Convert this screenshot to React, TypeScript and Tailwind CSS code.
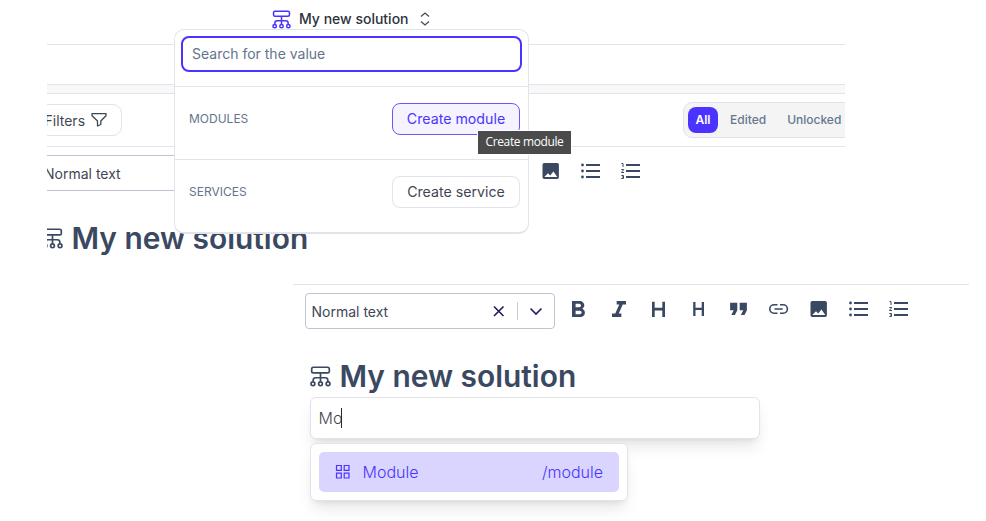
import React from "react";

const ink = "#3a4961";

function SolutionIcon({ className }: { className: string }) {
  return (
    <svg viewBox="0 0 20 20" className={className} fill="none" stroke="currentColor" strokeWidth="1.6">
      <rect x="1.6" y="1.2" width="16.8" height="5.4" rx="1.6" />
      <path d="M10 6.6V15M3 15v-1.4a2.4 2.4 0 0 1 2.400-2.400h9.200a2.400 2.400 0 0 1 2.400 2.400V15" />
      <circle cx="2.8" cy="17" r="1.8" />
      <circle cx="10" cy="17" r="1.8" />
      <circle cx="17.2" cy="17" r="1.8" />
    </svg>
  );
}

function Glyph({ children }: { children: React.ReactNode }) {
  return (
    <svg viewBox="0 0 24 24" className="size-6 shrink-0" fill={ink}>
      {children}
    </svg>
  );
}

const Bold = () => (
  <Glyph>
    <path
      transform="translate(-2.4 -.57) scale(1.2 1.143)"
      d="M15.6 10.79c.97-.67 1.65-1.77 1.65-2.79 0-2.26-1.75-4-4-4H7v14h7.04c2.09 0 3.71-1.7 3.71-3.79 0-1.52-.86-2.82-2.15-3.42zM10 6.5h3c.83 0 1.5.67 1.5 1.5s-.67 1.5-1.5 1.5h-3v-3zm3.5 9H10v-3h3.5c.83 0 1.5.67 1.5 1.5s-.67 1.5-1.5 1.5z"
    />
  </Glyph>
);
const Italic = () => (
  <Glyph>
    <path transform="translate(-1 -.57) scale(1.167 1.143)" d="M10 4v3h2.21l-3.42 8H6v3h8v-3h-2.21l3.42-8H18V4z" />
  </Glyph>
);
const HeadingLarge = () => (
  <Glyph>
    <path d="M6 4.7h2.7v6H16.3v-6H19V20h-2.7v-6.6H8.7V20H6z" />
  </Glyph>
);
const HeadingSmall = () => (
  <Glyph>
    <path d="M7.2 5h2.3v5.8h6.2V5H18v14h-2.3v-6H9.500V19H7.200z" />
  </Glyph>
);
const Quote = () => (
  <Glyph>
    <path transform="translate(-1.9 -2.7) scale(1.2 1.22)" d="M6 17h3l2-4V7H5v6h3zm8 0h3l2-4V7h-6v6h3z" />
  </Glyph>
);
const LinkGlyph = () => (
  <Glyph>
    <path d="M11.500 7.8H8a4.200 4.200 0 0 0 0 8.400h3.500M14 7.800h3.200a4.200 4.200 0 0 1 0 8.400H14M8.500 12h8.200" fill="none" stroke={ink} strokeWidth="1.6" />
  </Glyph>
);
const Picture = () => (
  <Glyph>
    <path d="M6.200 4h13a1.700 1.700 0 0 1 1.700 1.700v12.600a1.700 1.700 0 0 1-1.700 1.700h-13a1.700 1.700 0 0 1-1.700-1.700V5.700A1.700 1.700 0 0 1 6.200 4zM6.300 18h13l-3.900-5.400-3.200 4-2.200-2.400z" fillRule="evenodd" />
  </Glyph>
);
const Bullets = () => (
  <Glyph>
    <path d="M8 5h14v2H8zM8 11h14v2H8zM8 17h14v2H8z" />
    <circle cx="4.500" cy="6" r="1.400" />
    <circle cx="4.500" cy="12" r="1.400" />
    <circle cx="4.500" cy="18" r="1.400" />
  </Glyph>
);
const Numbers = () => (
  <Glyph>
    <path d="M8 5h14v2H8zM8 11h14v2H8zM8 17h14v2H8z" />
    <path d="M3.500 4.500H5V8M3.300 10.500h2.400v.5L3.600 13v.5h2.400M3.300 16.500h2.200v3H3.300M4 18h1.500" fill="none" stroke={ink} strokeWidth="1" />
  </Glyph>
);

function SegmentTabs() {
  return (
    <div className="flex h-9 w-[180px] shrink-0 items-center rounded-[9px] border border-[#e1e3e9] bg-[#f4f4f5] pl-1 text-[12px] font-medium text-[#64788d]">
      <span className="flex h-[26px] w-[30px] items-center justify-center rounded-lg bg-[#4a33ff] font-semibold text-white">All</span>
      <span className="ml-3">Edited</span>
      <span className="ml-[21px]">Unlocked</span>
    </div>
  );
}

function SolutionDropdown() {
  return (
    <div className="absolute left-[174px] top-[29px] h-[205px] w-[355px] rounded-[10px] border border-b-2 border-[#e1e4ea] bg-white">
      <div className="h-[57px] border-b border-[#e1e4ea] px-[6px] pt-[6px]">
        <div className="flex h-9 items-center rounded-lg border-2 border-[#4a33ff] pb-[2px] pl-[9px] text-[14px] text-[#64748b]">Search for the value</div>
      </div>
      <div className="flex h-[73px] items-center justify-between border-b border-[#e1e4ea] pb-[9px] pl-[14px] pr-2">
        <span className="text-[12px] text-[#64748b]">MODULES</span>
        <span className="flex h-8 w-32 items-center justify-center rounded-lg border border-[#6c59f5] bg-[#f5f3ff] text-[14.200px] text-[#4a33ff]">Create module</span>
      </div>
      <div className="flex h-[72px] items-center justify-between pb-[8px] pl-[14px] pr-2">
        <span className="text-[12px] text-[#64748b]">SERVICES</span>
        <span className="flex h-8 w-32 items-center justify-center rounded-lg border border-[#e1e4ea] text-[14.200px] text-[#3f4753]">Create service</span>
      </div>
    </div>
  );
}

export default function App() {
  return (
    <div className="relative h-[521px] w-[986px] overflow-hidden bg-white font-['Inter','Liberation_Sans',sans-serif] text-[#3f4753]">
      <section className="ml-[47px] h-[284px] w-[798px] overflow-hidden">
        <header className="flex h-[45px] items-start border-b border-[#e1e4ea] pl-[225px] pt-[9px]">
          <SolutionIcon className="mt-[0.500px] size-[19px] text-[#4a33ff]" />
          <span className="ml-2 text-[14px] font-medium leading-5 text-[#2d333d]">My new solution</span>
          <svg viewBox="0 0 12 14" className="ml-[10px] mt-[3px] h-[14px] w-3" fill="none" stroke="#3f4753" strokeWidth="1.200">
            <path d="M2 4.500 6 1l4 3.500M2 9.500 6 13l4-3.500" />
          </svg>
        </header>
        <div className="h-10 border-b border-[#e1e4ea]" />
        <div className="h-[9px] border-b border-[#e1e4ea] bg-[#f8f8f8]" />
        <div className="flex h-[53px] items-center justify-between border-b border-[#e1e4ea]">
          <div className="-ml-5 flex h-8 w-[95px] items-center rounded-[9px] border border-[#e1e4ea] pl-[16.500px] text-[14px]">
            Filters
            <svg viewBox="0 0 16 16" className="ml-[6px] size-4" fill="none" stroke="#3f4753" strokeWidth="1.300" strokeLinejoin="round">
              <path d="M1 1.700h14v2L9.800 9v3.500L6.500 14V9L1 3.700z" />
            </svg>
          </div>
          <div className="w-[162px] overflow-hidden">
            <SegmentTabs />
          </div>
        </div>
        <div className="flex pt-2">
          <div className="-ml-2 flex h-9 w-[300px] items-center rounded border border-[#bfc3d2] pl-1 text-[14px]">Normal text</div>
          <div className="ml-[199px] flex gap-4 pt-1">
            <Picture />
            <Bullets />
            <Numbers />
          </div>
        </div>
        <h1 className="-ml-[5px] mt-[29px] flex items-center text-[29.900px] font-semibold leading-9 text-[#3a4961]">
          <SolutionIcon className="mr-[8.500px] size-[21px]" />
          My new solution
        </h1>
      </section>

      <section className="ml-[293px] w-[676px] border-t border-[#e1e4ea] pl-3 pt-2">
        <div className="flex">
          <div className="flex h-9 w-[250px] items-center rounded border border-[#bfc3d2] pl-[5.500px] pt-px text-[14px]">
            Normal text
            <svg viewBox="0 0 60 20" className="ml-auto mr-[6px] h-5 w-[60px]" fill="none" stroke="#1e1b5e" strokeWidth="1.600">
              <path d="m6 4.500 9.500 9.500M15.500 4.500 6 14M42.500 6.500l5.500 5.500 5.500-5.500" />
              <path d="M29.500 0v18" stroke="#ccc" strokeWidth="1" />
            </svg>
          </div>
          <div className="ml-[11px] flex gap-4 pt-1">
            <Bold />
            <Italic />
            <HeadingLarge />
            <HeadingSmall />
            <Quote />
            <LinkGlyph />
            <Picture />
            <Bullets />
            <Numbers />
          </div>
        </div>
        <div className="pl-[5px] pt-[29px]">
          <h1 className="flex items-center text-[29.900px] font-semibold leading-9 text-[#3a4961]">
            <SolutionIcon className="mr-[8.500px] size-[21px]" />
            My new solution
          </h1>
          <div className="mt-[3px] flex h-[42px] w-[450px] items-center rounded-md border border-[#e1e3e8] bg-white pl-[7.500px] text-[16px] font-light shadow-lg">
            Mo
            <span className="-ml-px h-5 w-px bg-[#1f2937]" />
          </div>
          <div className="relative mt-1 h-[58px] w-[318px] rounded-md border border-[#e1e3e8] bg-white p-2 shadow-lg">
            <div className="flex h-10 items-center rounded-[5px] bg-[#dad5ff] px-4 text-[16px] font-light text-[#4a33ff]">
              <svg viewBox="0 0 16 16" className="mr-[11.500px] size-4" fill="none" stroke="#4a33ff" strokeWidth="1.200">
                <path d="M1.500 1.500h4.800v4.800H1.500zM9.200 1.500H14v4.800H9.200zM1.500 9.200h4.800V14H1.500zM9.200 9.200H14V14H9.200z" />
              </svg>
              Module
              <span className="ml-auto">/module</span>
            </div>
          </div>
        </div>
      </section>

      <SolutionDropdown />
      <div className="absolute left-[478px] top-[131px] flex h-[23px] w-[93px] items-center justify-center bg-[#4b4b4b] pb-px font-['Open_Sans','Noto_Sans',sans-serif] text-[12px] tracking-[-0.380px] text-white outline outline-white">
        Create module
      </div>
    </div>
  );
}
